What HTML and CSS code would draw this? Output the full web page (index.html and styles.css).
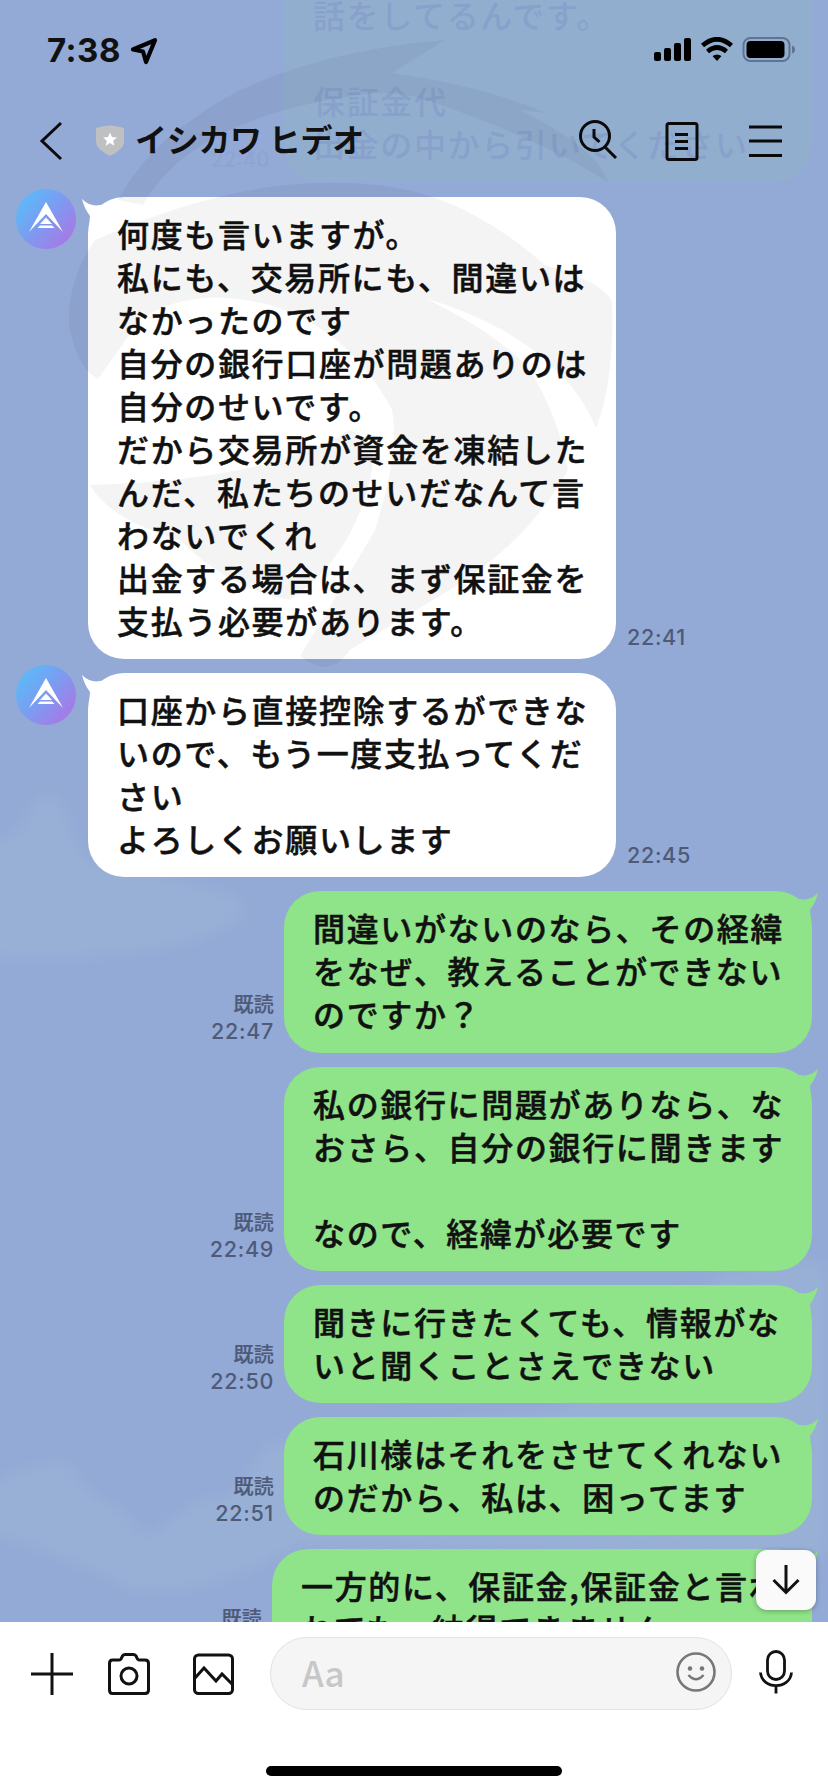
FILE: index.html
```html
<!DOCTYPE html>
<html lang="ja">
<head>
<meta charset="utf-8">
<title>イシカワ ヒデオ</title>
<link rel="stylesheet" href="styles.css">
</head>
<body>
<div class="phone">
  <svg class="wallpaper" viewBox="0 0 828 1792" aria-hidden="true">
    <defs><filter id="soft" x="-20%" y="-20%" width="140%" height="140%"><feGaussianBlur stdDeviation="10"/></filter></defs>
    <g fill="#9db6d6" opacity=".6" filter="url(#soft)">
      <path d="M-20 850L20 830L35 798Q60 785 68 820L85 860Q150 870 215 890Q270 905 230 925Q160 965 -20 955Z"/>
      <path d="M-20 1490L20 1470L70 1460Q85 1500 125 1510L145 1540L200 1498Q240 1510 260 1450L290 1440L828 1380V1560L300 1545Q200 1600 130 1590Q80 1560 -20 1530Z"/>
      <path d="M560 1410L728 1270L828 1260V1410Z"/>
    </g>
  </svg>

  <div class="past">
    <div class="past-bubble">話をしてるんです。<br><br>保証金代<br>出金の中から引いてください</div>
    <span class="past-time">22:40</span>
  </div>

  <header class="top">
    <div class="status">
      <span class="clock">7:38</span>
      <svg class="loc" width="30" height="30" viewBox="0 0 30 30"><path d="M4 13.500L26 4.200L17 26L14 15.500Z" fill="none" stroke="#000" stroke-width="4.200" stroke-linejoin="round"/></svg>
      <svg class="signals" width="144" height="28" viewBox="0 0 144 28">
        <rect x="1" y="15" width="7" height="9" rx="2"/><rect x="11" y="11" width="7" height="13" rx="2"/><rect x="21" y="6" width="7" height="18" rx="2"/><rect x="31" y="1" width="7" height="23" rx="2"/>
        <g fill="none" stroke="#000" stroke-width="4.600"><path d="M49.500 8.500Q64 -4 78.500 8.500"/><path d="M54.500 14.500Q64 6.500 73.500 14.500"/></g>
        <path d="M59.500 19Q64 16 68.500 19L64 24Z"/>
        <rect x="90.500" y="1" width="46" height="23" rx="7" fill="none" stroke="#5f7492" stroke-width="2"/>
        <rect x="93.500" y="4" width="38" height="17" rx="4"/>
        <path d="M139 8.500Q142 9.500 142 12.500Q142 15.500 139 16.500Z" fill="#5f7492"/>
      </svg>
    </div>
    <div class="nav">
      <svg class="back" width="26" height="40" viewBox="0 0 26 40"><path d="M23 2L4 20L23 38" fill="none" stroke="#0a0a0a" stroke-width="3"/></svg>
      <svg class="badge" width="30" height="34" viewBox="0 0 30 34"><path d="M1 4Q15 -1 29 4V18Q29 25 15 32Q1 25 1 18Z" fill="#bfc0c2"/><path d="M15 8.500l2 4.600 5 .4-3.800 3.300 1.200 4.900-4.400-2.700-4.400 2.700 1.200-4.900L8 13.500l5-.4Z" fill="#fff"/></svg>
      <h1 class="name">イシカワ ヒデオ</h1>
      <svg class="tools" width="206" height="44" viewBox="0 0 206 44" fill="none" stroke="#0a0a0a" stroke-width="3">
        <circle cx="17" cy="17" r="14.500"/><path d="M27 28L38 39M16 10V18L21.500 23"/>
        <rect x="89" y="4.500" width="30" height="36" rx="2"/><path d="M97 15.500H110M97 22.500H110M97 29.500H110"/>
        <path d="M171 8H204M171 22H204M171 36.500H204"/>
      </svg>
    </div>
  </header>

  <main class="chat">
    <section class="row in">
      <svg class="avatar"><use href="#ava"/></svg>
      <div class="bubble">何度も言いますが。<br>私にも、交易所にも、間違いは<br>なかったのです<br>自分の銀行口座が問題ありのは<br>自分のせいです。<br>だから交易所が資金を凍結した<br>んだ、私たちのせいだなんて言<br>わないでくれ<br>出金する場合は、まず保証金を<br>支払う必要があります。</div>
      <div class="meta">22:41</div>
    </section>
    <section class="row in">
      <svg class="avatar"><use href="#ava"/></svg>
      <div class="bubble">口座から直接控除するができな<br>いので、もう一度支払ってくだ<br>さい<br>よろしくお願いします</div>
      <div class="meta">22:45</div>
    </section>
    <section class="row out">
      <div class="meta"><span class="read">既読</span><br>22:47</div>
      <div class="bubble tall">間違いがないのなら、その経緯<br>をなぜ、教えることができない<br>のですか？</div>
    </section>
    <section class="row out">
      <div class="meta"><span class="read">既読</span><br>22:49</div>
      <div class="bubble">私の銀行に問題がありなら、な<br>おさら、自分の銀行に聞きます<br><br>なので、経緯が必要です</div>
    </section>
    <section class="row out">
      <div class="meta"><span class="read">既読</span><br>22:50</div>
      <div class="bubble">聞きに行きたくても、情報がな<br>いと聞くことさえできない</div>
    </section>
    <section class="row out">
      <div class="meta"><span class="read">既読</span><br>22:51</div>
      <div class="bubble">石川様はそれをさせてくれない<br>のだから、私は、困ってます</div>
    </section>
    <section class="row out wide">
      <div class="meta"><span class="read">既読</span><br>22:52</div>
      <div class="bubble">一方的に、保証金,保証金と言わ<br>れても、納得できません</div>
    </section>
  </main>

  <footer class="bar">
    <div class="compose">
      <svg class="acts" width="204" height="44" viewBox="0 0 204 44" fill="none" stroke="#111" stroke-width="3">
        <path d="M0 22H42M21 1V43"/>
        <path d="M81.500 8H88Q90 8 90.500 6L91.500 4Q92 2.500 94 2.500H102.500Q104.500 2.500 105 4L106 6Q106.500 8 108.500 8H114Q117.500 8 117.500 11.500V38Q117.500 41.500 114 41.500H81.500Q78.500 41.500 78.500 38V11.500Q78.500 8 81.500 8Z"/><circle cx="98" cy="24" r="8"/>
        <rect x="163.500" y="3" width="38" height="38.500" rx="4"/><path d="M164 26L173 16L185 29L191 22L201 32"/>
      </svg>
      <div class="field"><span class="hint">Aa</span>
        <svg class="smile" width="40" height="40" viewBox="0 0 40 40"><circle cx="20" cy="20" r="18.500" fill="none" stroke="#777" stroke-width="2.600"/><circle cx="14" cy="16.500" r="2.300" fill="#777"/><circle cx="26" cy="16.500" r="2.300" fill="#777"/><path d="M12.500 23Q20 31.500 27.500 23" fill="none" stroke="#777" stroke-width="2.600"/></svg>
      </div>
      <svg class="mic" width="34" height="44" viewBox="0 0 34 44" fill="none" stroke="#111" stroke-width="2.800"><rect x="8.500" y="1.500" width="17" height="28" rx="8.500"/><path d="M1.500 22.500C3 40 31 40 32.500 22.500M17 36V43.500"/></svg>
    </div>
    <div class="home"></div>
  </footer>

  <svg class="swirl" viewBox="0 0 828 700" aria-hidden="true">
    <path d="M118 200Q145 150 196 117Q270 62 414 43L445 40L392 73Q480 85 547 113L520 110Q600 150 608 183Q560 148 441 105Q400 88 359 95Q250 110 190 153Q160 175 143 205Z"/>
    <path d="M95 240Q230 180 339 183Q400 183 449 203Q500 225 545 265Q600 280 612 301Q615 380 596 428Q560 340 425 298Q500 335 530 370Q560 420 568 470Q530 540 450 590Q400 620 350 650Q330 680 300 656Q340 590 375 530Q400 450 392 410Q350 330 270 305Q190 285 140 320L98 379Q78 370 69 326Q67 280 95 240Z"/>
    <path d="M90 485Q270 480 350 430Q380 440 370 480Q350 560 290 600Q230 590 180 540Q110 520 90 485Z"/>
  </svg>
  <div class="jump"><svg width="30" height="32" viewBox="0 0 30 32"><path d="M15 1V29M2.500 16L15 28.500L27.500 16" fill="none" stroke="#111" stroke-width="3"/></svg></div>
</div>

<svg class="defs" width="0" height="0">
  <linearGradient id="ag" x1="0.150" y1="0.200" x2="0.900" y2="0.850"><stop offset="0" stop-color="#5fb6f7"/><stop offset=".5" stop-color="#8098f0"/><stop offset="1" stop-color="#a878e6"/></linearGradient>
  <symbol id="ava" viewBox="0 0 60 60"><circle cx="30" cy="30" r="30" fill="url(#ag)"/><path d="M30 13L47 43L30 25L13 43Z" fill="#fff"/><path d="M30 28.500L36 35H24Z" fill="#fff"/><path d="M24 36.500H36L38.500 39H21.500Z" fill="#fff"/></symbol>
</svg>
</body>
</html>
```
FILE: styles.css
```css
* { box-sizing: border-box; }
body { margin: 0; }
.phone {
  position: relative; width: 828px; height: 1792px; overflow: hidden;
  display: flex; flex-direction: column;
  background: #93a9d6; color: #111;
  font-family: Inter, "Noto Sans CJK JP", sans-serif;
}
.wallpaper { position: absolute; inset: 0; width: 828px; height: 1792px; }
.defs { position: absolute; }
.past { position: absolute; top: 0; left: 0; width: 828px; height: 182px; }
.past-bubble {
  position: absolute; right: 16px; bottom: 0; width: 528px; height: 220px;
  padding: 31px 0 0 29px; border-radius: 0 0 36px 36px;
  background: #92aecf; color: #88a1cb;
  font: 500 32px/43px "Noto Sans CJK JP", sans-serif; letter-spacing: 1.650px; white-space: nowrap;
}
.past-time { position: absolute; left: 211px; top: 147px; font-size: 21px; color: #8ea4d0; }

.top { position: relative; height: 183px; flex: none; }
.status { display: flex; height: 100px; padding: 36px 31px 0 47px; align-items: flex-start; }
.clock { font: 700 33px/28px Inter, sans-serif; letter-spacing: .5px; }
.loc { margin-left: 8px; }
.signals { margin-left: auto; margin-top: 1px; }
.nav { display: flex; align-items: center; height: 82px; padding: 0 44px 0 38px; }
.badge { margin-left: 31px; }
.name { margin: -6px 0 0 10px; font: 700 32px/40px "Noto Sans CJK JP", sans-serif; letter-spacing: -.3px; }
.tools { margin-left: auto; }

.chat { flex: none; height: 1439px; padding-top: 14px; overflow: hidden; display: flex; flex-direction: column; gap: 14px; position: relative; }
.row { display: flex; flex: none; align-items: flex-end; }
.bubble {
  position: relative; width: 528px; padding: 15px 0 17px 29px; border-radius: 36px;
  font: 500 32px/43px "Noto Sans CJK JP", sans-serif; letter-spacing: 1.650px; white-space: nowrap;
  -webkit-text-stroke: .5px #111;
}
.tall { padding-bottom: 18px; }
.in { padding-left: 16px; }
.in .bubble { margin-left: 12px; background: #fff; }
.out { justify-content: flex-end; padding-right: 16px; }
.out .bubble { background: #8fe388; }
.wide .bubble { width: 540px; }
.avatar { width: 60px; height: 60px; align-self: flex-start; margin-top: -8px; }
.bubble::before {
  content: ""; position: absolute; top: 2px; width: 40px; height: 34px; background: inherit;
}
.in .bubble::before { left: -6px; clip-path: path("M0 0Q8 8 18 6L34 4L30 24L7 28L8 17Q2 9 0 0Z"); }
.out .bubble::before { right: -6px; clip-path: path("M40 0Q32 8 22 6L6 4L10 24L33 28L32 17Q38 9 40 0Z"); }
.meta { font: 500 21.500px/27px Inter, "Noto Sans CJK JP", sans-serif; letter-spacing: .7px; color: #4d5a78; padding-bottom: 8px; }
.read { font-size: 20px; letter-spacing: .3px; line-height: 20px; -webkit-text-stroke: .2px #4d5a78; }
.in .meta { margin-left: 11px; }
.out .meta { margin-right: 10px; text-align: right; }

.bar { position: relative; flex: 1; background: #fff; }
.compose { display: flex; align-items: center; padding: 15px 35px 0 31px; height: 88px; }
.field {
  display: flex; align-items: center; justify-content: space-between; flex: none;
  width: 462px; height: 73px; margin-left: 35px; padding: 0 15px 0 31px;
  border: 1px solid #e2e2e2; border-radius: 37px; background: #f5f5f5;
  color: #c7c7c7; font: 500 35px/70px "Noto Sans CJK JP", sans-serif;
}
.hint { height: 73px; }
.smile { margin-bottom: 3px; }
.mic { margin-left: auto; margin-bottom: 3px; }
.home { width: 296px; height: 10px; margin: 56px auto 0; border-radius: 5px; background: #000; }
.swirl { position: absolute; left: 0; top: 0; width: 828px; height: 700px; fill: #000; opacity: .04; }
.jump {
  position: absolute; left: 756px; top: 1550px; width: 60px; height: 60px; border-radius: 11px;
  background: #fafafa; display: flex; align-items: center; justify-content: center;
  box-shadow: 0 1px 5px rgba(0,0,0,.3);
}
```
